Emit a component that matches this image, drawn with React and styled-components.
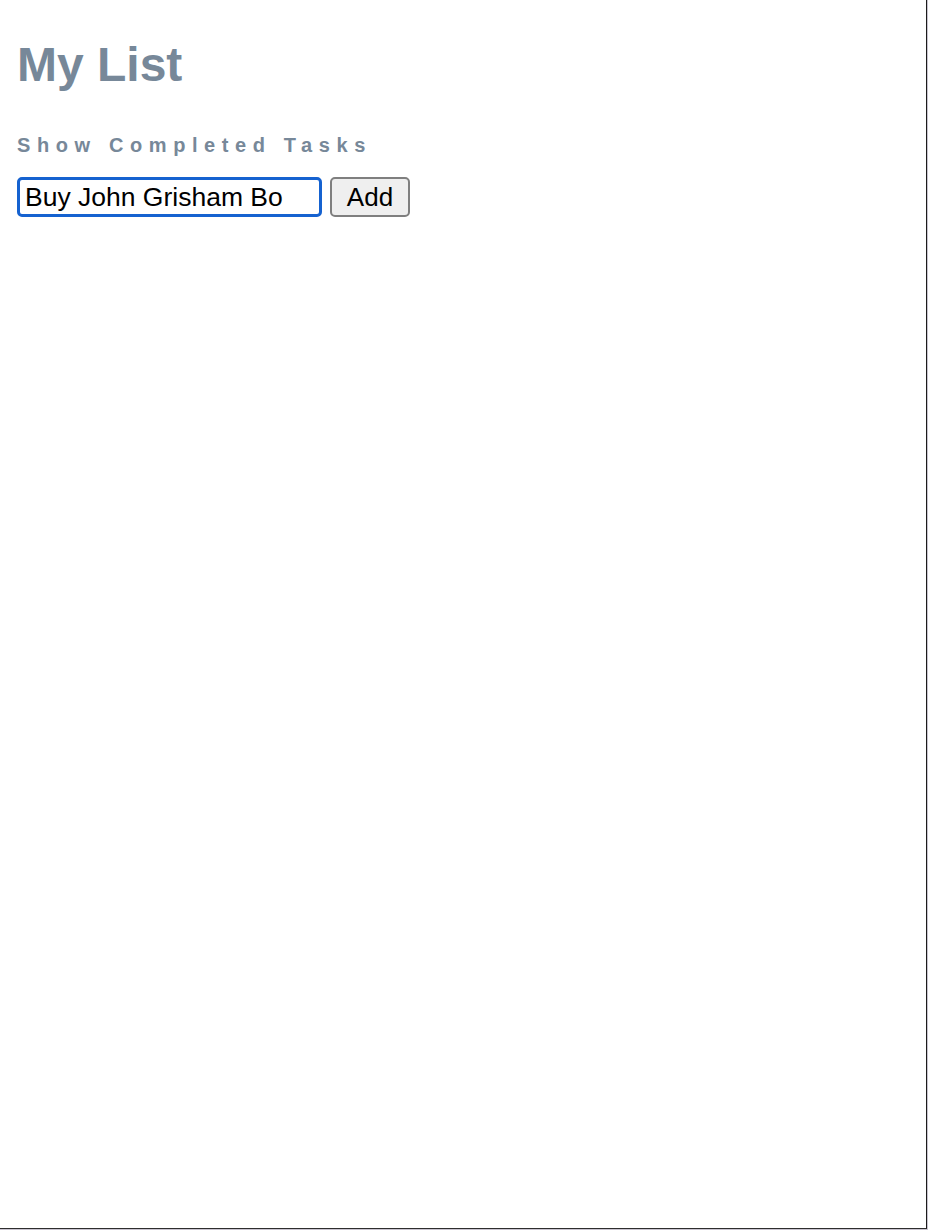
import React, { useState } from 'react';
import styled, { createGlobalStyle } from 'styled-components';

const GlobalStyle = createGlobalStyle`
  html, body {
    margin: 0;
    padding: 0;
    background: #c9c4cf;
  }
`;

const Frame = styled.div`
  box-sizing: border-box;
  width: 927px;
  height: 1229px;
  background: #ffffff;
  border-right: 1px solid #1c1c1c;
  border-bottom: 1px solid #2e2e2e;
  padding: 37px 17px 0;
  font-family: "Liberation Sans", Arial, sans-serif;
`;

const Title = styled.h1`
  margin: 0;
  font-size: 48px;
  font-weight: 700;
  line-height: 55px;
  color: #778899;
`;

const FilterLabel = styled.label`
  display: block;
  margin-top: 42px;
  font-size: 20px;
  font-weight: 700;
  line-height: 22px;
  letter-spacing: 6.6px;
  color: #778899;
  cursor: pointer;
`;

const AddForm = styled.form`
  display: flex;
  align-items: stretch;
  gap: 8px;
  margin-top: 21px;
`;

const TaskInput = styled.input`
  box-sizing: border-box;
  width: 305px;
  height: 40px;
  padding: 0 5px;
  border: 3px solid #1562d0;
  border-radius: 5px;
  outline: none;
  font-family: "Liberation Sans", Arial, sans-serif;
  font-size: 26.5px;
  color: #000000;
`;

const AddButton = styled.button`
  box-sizing: border-box;
  width: 80px;
  height: 40px;
  padding: 0;
  background: #efefef;
  border: 2px solid #7f7f7f;
  border-radius: 5px;
  font-family: "Liberation Sans", Arial, sans-serif;
  font-size: 26px;
  color: #000000;
  cursor: pointer;
`;

export default function App() {
  const [task, setTask] = useState('Buy John Grisham Bo');

  const handleSubmit = (event) => {
    event.preventDefault();
  };

  return (
    <>
      <GlobalStyle />
      <Frame>
        <Title>My List</Title>
        <FilterLabel>Show Completed Tasks</FilterLabel>
        <AddForm onSubmit={handleSubmit}>
          <TaskInput
            type="text"
            value={task}
            onChange={(event) => setTask(event.target.value)}
          />
          <AddButton type="submit">Add</AddButton>
        </AddForm>
      </Frame>
    </>
  );
}
